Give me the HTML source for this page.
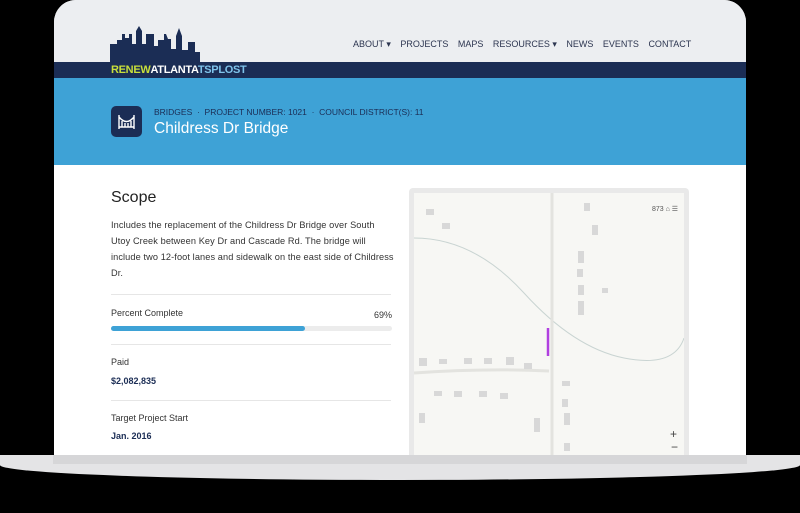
<!DOCTYPE html>
<html><head><style>
*{margin:0;padding:0;box-sizing:border-box}
body{width:800px;height:513px;background:#000;position:relative;overflow:hidden;font-family:"Liberation Sans",sans-serif}
.screen{position:absolute;left:54px;top:0;width:692px;height:460px;border-radius:22px 22px 0 0;overflow:hidden;background:#fff}
.hdr{position:absolute;left:0;top:0;width:100%;height:62px;background:#eceef1}
.navy{position:absolute;left:0;top:62px;width:100%;height:16px;background:#1b2d55}
.logo{position:absolute;left:57px;top:64px;font-weight:bold;font-size:11px;letter-spacing:-0.3px;color:#fff}
.logo b{color:#c8df3a}.logo i{font-style:normal;color:#7fc3ea}
.nav{position:absolute;top:39px;left:299px;font-size:9px;color:#2c3550}
.nav span{margin-right:9.5px}
.blue{position:absolute;left:0;top:78px;width:100%;height:87px;background:#3ea2d6}
.icon{position:absolute;left:57px;top:106px;width:31px;height:31px;background:#1b2d55;border-radius:5px}
.crumb{position:absolute;left:100px;top:107px;font-size:8.5px;color:#1b2d55}
.title{position:absolute;left:100px;top:120px;font-size:15.5px;color:#fff}
.scope{position:absolute;left:57px;top:189px;font-size:16px;color:#222}
.p{position:absolute;left:57px;top:217px;width:320px;font-size:9.2px;line-height:16px;color:#333;letter-spacing:0.1px;white-space:nowrap}
.hr{position:absolute;left:57px;width:280px;height:1px;background:#e6e6e6}
.lbl{position:absolute;left:57px;font-size:9px;color:#333}
.val{position:absolute;left:57px;font-size:9px;font-weight:bold;color:#1b2d55}
.map{position:absolute;left:355px;top:188px;width:280px;height:280px;background:#e9e9e9;border-radius:4px}
.mapin{position:absolute;left:5px;top:5px;width:270px;height:275px;background:#f7f7f4;overflow:hidden}
.base1{position:absolute;left:0;top:455px;width:800px;height:25px;background:#e4e4e6;border-radius:0 0 50% 50%/0 0 60% 60%}
.base2{position:absolute;left:53px;top:455px;width:694px;height:9px;background:#d6d6d8}
</style></head><body>
<div class="screen">
<div class="hdr"></div>
<svg style="position:absolute;left:56px;top:26px" width="124" height="37" viewBox="0 0 124 37"><path fill="#1b2d55" d="M0 37V18h7v-4h5v-6h3v4h4v-4h3v10h4V5l3-5 3 5v13h4v-10h8v12h4v-6h6v-6h2l2 5h3v10h5V10l3-8 3 8v14h6v-8h7v10h5v11z"/></svg>
<div class="navy"></div>
<div class="logo"><b>RENEW</b>ATLANTA<i>TSPLOST</i></div>
<div class="nav"><span>ABOUT ▾</span><span>PROJECTS</span><span>MAPS</span><span>RESOURCES ▾</span><span>NEWS</span><span>EVENTS</span><span>CONTACT</span></div>
<div class="blue"></div>
<div class="icon"><svg width="31" height="31" viewBox="0 0 31 31"><path d="M8 9v14M23 9v14M8 11q7.5 9 15 0M8 21h15M11 15v6M14 17v4M17 17v4M20 15v6" stroke="#fff" stroke-width="1.4" fill="none"/></svg></div>
<div class="crumb">BRIDGES &nbsp;·&nbsp; PROJECT NUMBER: 1021 &nbsp;·&nbsp; COUNCIL DISTRICT(S): 11</div>
<div class="title">Childress Dr Bridge</div>
<div class="scope">Scope</div>
<div class="p">Includes the replacement of the Childress Dr Bridge over South<br>Utoy Creek between Key Dr and Cascade Rd. The bridge will<br>include two 12-foot lanes and sidewalk on the east side of Childress<br>Dr.</div>
<div class="hr" style="top:294px"></div>
<div class="lbl" style="top:308px">Percent Complete</div>
<div class="lbl" style="top:310px;left:320px">69%</div>
<div style="position:absolute;left:57px;top:326px;width:281px;height:5px;background:#ececec;border-radius:3px"><div style="width:194px;height:5px;background:#3ea2d6;border-radius:3px"></div></div>
<div class="hr" style="top:344px"></div>
<div class="lbl" style="top:357px">Paid</div>
<div class="val" style="top:376px">$2,082,835</div>
<div class="hr" style="top:400px"></div>
<div class="lbl" style="top:413px">Target Project Start</div>
<div class="val" style="top:431px">Jan. 2016</div>
<div class="map"><div class="mapin">
<svg width="270" height="275" viewBox="0 0 270 275">
<path d="M0 45q60 0 110 55t100 65 60-20" stroke="#c9d4d2" fill="none"/>
<path d="M0 180q70-5 135-2" stroke="#e3e3df" fill="none" stroke-width="3"/>
<path d="M138 0v275" stroke="#e3e3df" stroke-width="3"/>
<path d="M134 135v28" stroke="#b040e0" stroke-width="2.5"/>
<g fill="#d8d8d8"><rect x="28" y="30" width="8" height="6"/><rect x="12" y="16" width="8" height="6"/><rect x="170" y="10" width="6" height="8"/><rect x="178" y="32" width="6" height="10"/><rect x="164" y="58" width="6" height="12"/><rect x="163" y="76" width="6" height="8"/><rect x="164" y="92" width="6" height="10"/><rect x="164" y="108" width="6" height="14"/><rect x="188" y="95" width="6" height="5"/><rect x="5" y="165" width="8" height="8"/><rect x="25" y="166" width="8" height="5"/><rect x="50" y="165" width="8" height="6"/><rect x="70" y="165" width="8" height="6"/><rect x="92" y="164" width="8" height="8"/><rect x="110" y="170" width="8" height="6"/><rect x="20" y="198" width="8" height="5"/><rect x="40" y="198" width="8" height="6"/><rect x="65" y="198" width="8" height="6"/><rect x="86" y="200" width="8" height="6"/><rect x="148" y="188" width="8" height="5"/><rect x="148" y="206" width="6" height="8"/><rect x="150" y="220" width="6" height="12"/><rect x="120" y="225" width="6" height="14"/><rect x="150" y="250" width="6" height="8"/><rect x="5" y="220" width="6" height="10"/></g>
<text x="238" y="18" font-size="7" fill="#555" font-family="Liberation Sans">873 ⌂ ☰</text>
<text x="256" y="245" font-size="12" fill="#444" font-family="Liberation Sans">+</text>
<text x="257" y="258" font-size="12" fill="#444" font-family="Liberation Sans">−</text>
</svg></div></div>
</div>
<div class="base1"></div>
<div class="base2"></div>
</body></html>
